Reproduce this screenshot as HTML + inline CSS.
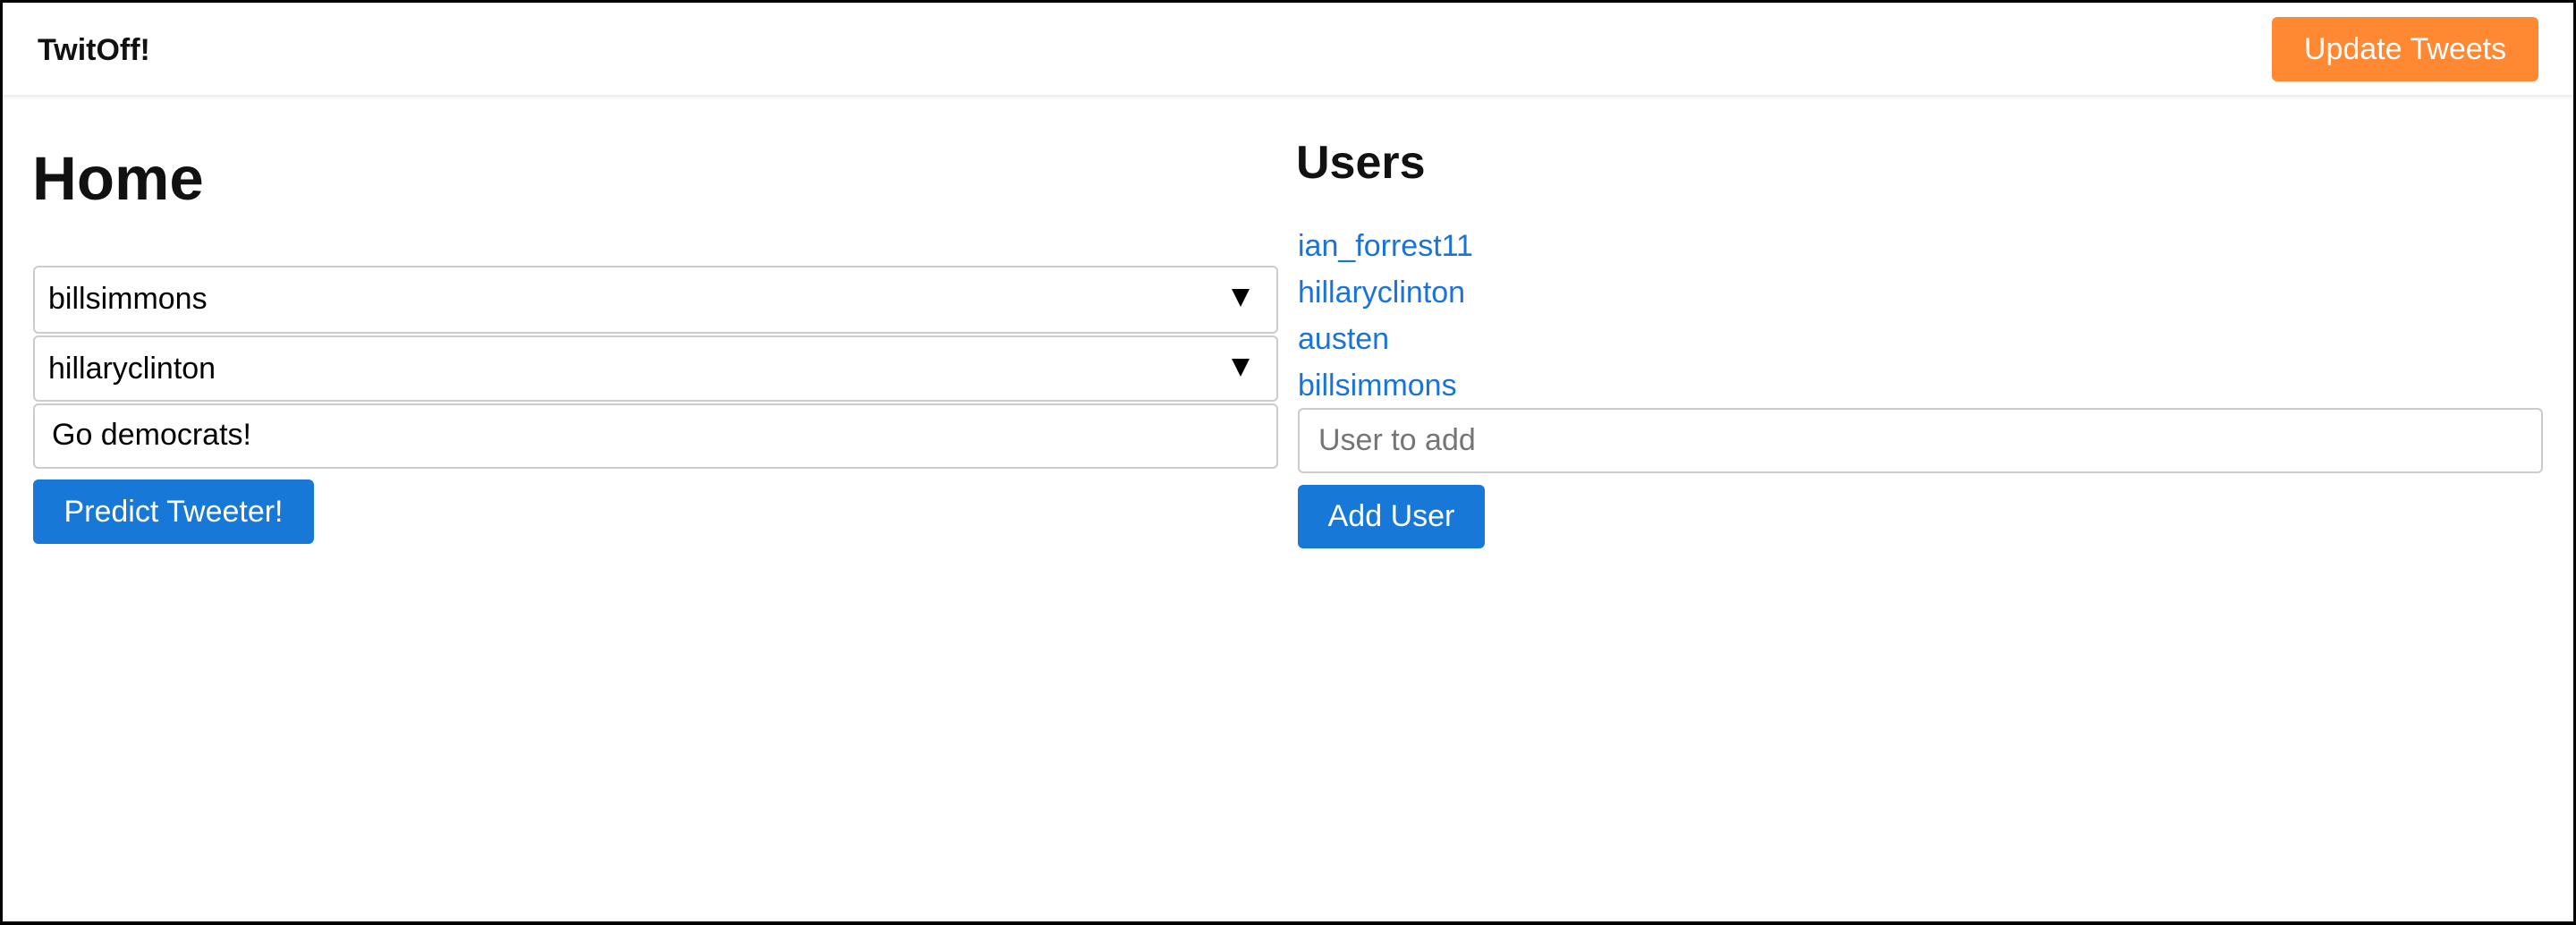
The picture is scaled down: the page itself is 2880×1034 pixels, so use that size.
<!DOCTYPE html>
<html><head><style>
*{box-sizing:border-box;margin:0;padding:0}
html,body{width:2880px;height:1034px;overflow:hidden;background:#fff}
body{font-family:"Liberation Sans",Arial,sans-serif;position:relative}
.frame{position:absolute;left:0;top:0;width:2880px;height:1034px;border:3px solid #000;border-bottom-width:4px}
.hdr{position:absolute;left:3px;top:3px;width:2874px;height:105px;border-bottom:2px solid #eee;box-shadow:0 2px 4px rgba(0,0,0,0.05)}
.a{position:absolute;white-space:nowrap}
.box{position:absolute;border:2px solid #ccc;border-radius:6px;background:#fff}
.btn{position:absolute;border-radius:6px;color:#fff;font-size:34px;display:flex;align-items:center;justify-content:center}
.lnk{color:#1a73d8;font-size:34px}
</style></head><body>
<div class="hdr"></div>
<div class="a" style="left:42px;top:36px;font-size:34px;font-weight:bold;line-height:40px;color:#111">TwitOff!</div>
<div class="btn" style="left:2540px;top:19px;width:298px;height:72px;background:#ff8833">Update Tweets</div>

<div class="a" style="left:36px;top:160px;font-size:69px;font-weight:bold;line-height:80px;color:#111">Home</div>

<div class="box" style="left:37px;top:297px;width:1392px;height:76px"></div>
<div class="a" style="left:54px;top:314px;font-size:34px;line-height:40px">billsimmons</div>
<div class="a" style="left:1377px;top:323px;width:0;height:0;border-left:10px solid transparent;border-right:10px solid transparent;border-top:20px solid #000"></div>

<div class="box" style="left:37px;top:375px;width:1392px;height:74px"></div>
<div class="a" style="left:54px;top:392px;font-size:34px;line-height:40px">hillaryclinton</div>
<div class="a" style="left:1377px;top:401px;width:0;height:0;border-left:10px solid transparent;border-right:10px solid transparent;border-top:20px solid #000"></div>

<div class="box" style="left:37px;top:451px;width:1392px;height:73px"></div>
<div class="a" style="left:58px;top:466px;font-size:34px;line-height:40px">Go democrats!</div>

<div class="btn" style="left:37px;top:536px;width:314px;height:72px;background:#1778d8">Predict Tweeter!</div>

<div class="a" style="left:1449px;top:152px;font-size:52px;font-weight:bold;line-height:60px;color:#111">Users</div>
<div class="a lnk" style="left:1451px;top:255px;line-height:40px">ian_forrest11</div>
<div class="a lnk" style="left:1451px;top:307px;line-height:40px">hillaryclinton</div>
<div class="a lnk" style="left:1451px;top:359px;line-height:40px">austen</div>
<div class="a lnk" style="left:1451px;top:411px;line-height:40px">billsimmons</div>

<div class="box" style="left:1451px;top:456px;width:1392px;height:73px"></div>
<div class="a" style="left:1474px;top:472px;font-size:34px;line-height:40px;color:#757575">User to add</div>

<div class="btn" style="left:1451px;top:542px;width:209px;height:71px;background:#1778d8">Add User</div>
<div class="frame"></div>
</body></html>
